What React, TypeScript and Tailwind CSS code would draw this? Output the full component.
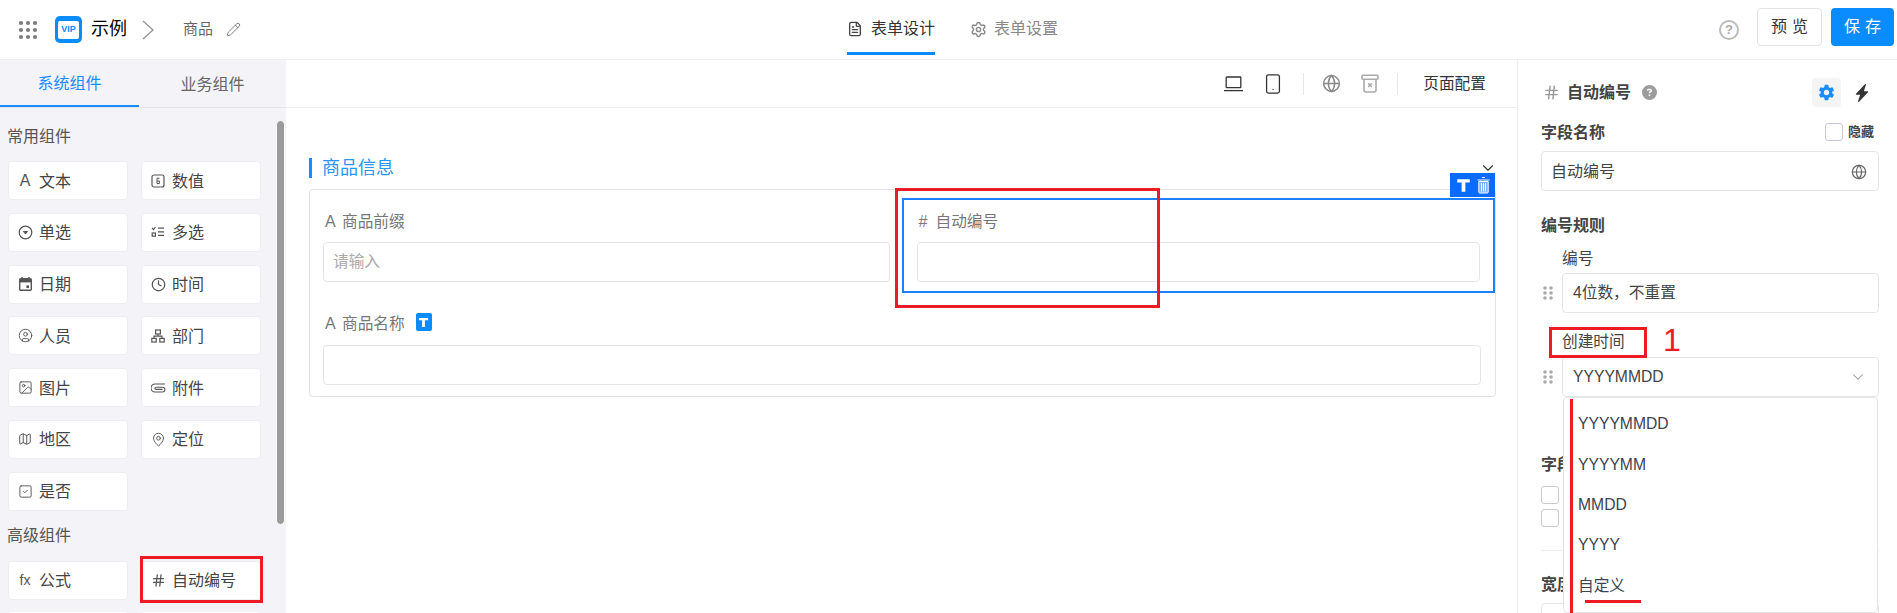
import {
  ChevronDown,
  CircleUser,
  Clock,
  FileText,
  Globe,
  Hash,
  Image,
  Map,
  MapPin,
  Pencil,
  Settings,
  Smartphone,
  SquareCheck,
} from "lucide-react";
import { BsLightningChargeFill } from "react-icons/bs";
import { IoSettingsSharp } from "react-icons/io5";
import { FaCircleQuestion } from "react-icons/fa6";

const FONT = "[font-family:'Liberation_Sans','Noto_Sans_CJK_SC',sans-serif]";

function NumberIcon() {
  return (
    <svg width="14" height="14" viewBox="0 0 14 14" fill="none" stroke="#555" strokeWidth="1.2">
      <rect x="1" y="1" width="12" height="12" rx="2" />
      <path d="M8.5 4.2H6v5.4h2.4V7H6" strokeWidth="1" />
    </svg>
  );
}

function RadioIcon() {
  return (
    <svg width="15" height="15" viewBox="0 0 15 15" fill="none" stroke="#555" strokeWidth="1.2">
      <circle cx="7.5" cy="7.5" r="6.3" />
      <path d="M4.6 6h5.8L7.5 9.4z" fill="#555" stroke="none" />
    </svg>
  );
}

function MultiIcon() {
  return (
    <svg width="14" height="14" viewBox="0 0 14 14" fill="none" stroke="#555" strokeWidth="1.2">
      <path d="M1 3l1.5 1.5L4.5 2" />
      <rect x="1.2" y="8" width="3.2" height="3.2" />
      <path d="M7 3.2h6M7 6.8h6M7 10.4h6" />
    </svg>
  );
}

function DateIcon() {
  return (
    <svg width="13" height="14" viewBox="0 0 13 14" fill="none">
      <path d="M3 0v3M10 0v3" stroke="#555" strokeWidth="1.4" />
      <rect x="0.7" y="1.7" width="11.6" height="11.6" rx="1" stroke="#555" strokeWidth="1.4" />
      <rect x="1" y="2" width="11" height="3.4" fill="#555" />
      <rect x="7.4" y="8.4" width="2.6" height="2.6" fill="#555" />
    </svg>
  );
}

function DeptIcon() {
  return (
    <svg width="14" height="14" viewBox="0 0 14 14" fill="none" stroke="#555" strokeWidth="1.2">
      <rect x="4.6" y="1" width="4.8" height="4" />
      <rect x="0.8" y="9.4" width="4.4" height="3.6" />
      <rect x="8.8" y="9.4" width="4.4" height="3.6" />
      <path d="M7 5v2.2M3 9.4V7.2h8v2.2" />
    </svg>
  );
}

function ClipIcon() {
  return (
    <svg width="15" height="10" viewBox="0 0 15 10" fill="none" stroke="#555" strokeWidth="1.1">
      <path d="M14 1H4a3.8 3.8 0 0 0 0 8h7.5a2.4 2.4 0 0 0 0-4.8H5a1.1 1.1 0 0 0 0 2.2h6.5" />
    </svg>
  );
}

function DragDots() {
  return (
    <svg width="10" height="14" viewBox="0 0 10 14" fill="#aaa">
      {[2, 7, 12].map((y) => (
        <g key={y}>
          <circle cx="2" cy={y} r="1.8" />
          <circle cx="8" cy={y} r="1.8" />
        </g>
      ))}
    </svg>
  );
}

function AppsIcon() {
  return (
    <svg width="20" height="20" viewBox="0 0 20 20" fill="#7b7b7b">
      {[3, 10, 17].map((y) =>
        [3, 10, 17].map((x) => <circle key={`${x}-${y}`} cx={x} cy={y} r="2.1" />)
      )}
    </svg>
  );
}

function TShape({ size = 12 }: { size?: number }) {
  return (
    <svg width={size} height={size} viewBox="0 0 12 12" fill="#fff">
      <path d="M1 1h10v2.6H7.5V11h-3V3.6H1z" />
    </svg>
  );
}

function TBadge() {
  return (
    <span className="flex h-[18px] w-[16px] items-center justify-center rounded-[2px] bg-[#0a8cff]">
      <TShape size={11} />
    </span>
  );
}

function TrashWhite() {
  return (
    <svg width="13" height="17" viewBox="0 0 13 17" fill="none" stroke="#fff">
      <path d="M5 0.5h3M0.5 3h12" strokeWidth="1.2" />
      <path d="M1.8 4.5h9.4V15a1 1 0 0 1-1 1H2.8a1 1 0 0 1-1-1z" fill="#7fb0ff" strokeWidth="1" />
      <path d="M4.5 6v8.5M6.5 6v8.5M8.5 6v8.5" strokeWidth="1" />
    </svg>
  );
}

function LaptopIcon() {
  return (
    <svg width="19" height="16" viewBox="0 0 19 16" fill="none" stroke="#333" strokeWidth="1.3">
      <rect x="2.2" y="1" width="14.6" height="10.6" rx="0.6" />
      <path d="M0 14.6h19" />
    </svg>
  );
}

function BinIcon() {
  return (
    <svg width="18" height="19" viewBox="0 0 18 19" fill="none" stroke="#aaa" strokeWidth="1.6">
      <rect x="1" y="1.2" width="16" height="4" rx="1" />
      <path d="M3 5.2V16a2 2 0 0 0 2 2h8a2 2 0 0 0 2-2V5.2" />
      <path d="M7.2 9.4l3.6 3.6M10.8 9.4l-3.6 3.6" />
    </svg>
  );
}

const basic = [
  { label: "文本", icon: <span className="text-[16px] leading-none text-[#555]">A</span> },
  { label: "数值", icon: <NumberIcon /> },
  { label: "单选", icon: <RadioIcon /> },
  { label: "多选", icon: <MultiIcon /> },
  { label: "日期", icon: <DateIcon /> },
  { label: "时间", icon: <Clock size={15} color="#555" /> },
  { label: "人员", icon: <CircleUser size={15} color="#555" strokeWidth={1.5} /> },
  { label: "部门", icon: <DeptIcon /> },
  { label: "图片", icon: <Image size={15} color="#555" strokeWidth={1.5} /> },
  { label: "附件", icon: <ClipIcon /> },
  { label: "地区", icon: <Map size={14} color="#555" strokeWidth={1.7} /> },
  { label: "定位", icon: <MapPin size={15} color="#555" strokeWidth={1.5} /> },
  { label: "是否", icon: <SquareCheck size={15} color="#555" strokeWidth={1.5} /> },
];

function ComponentCard({ label, icon }: { label: string; icon: React.ReactNode }) {
  return (
    <div className="flex h-[39px] items-center rounded-[4px] border border-[#eeeef2] bg-white pl-[8px] text-[16px] text-[#444]">
      <span className="flex w-[16px] justify-center">{icon}</span>
      <span className="ml-[6px] pt-[2px]">{label}</span>
    </div>
  );
}

function Sidebar() {
  return (
    <aside className="relative w-[286px] shrink-0 overflow-hidden bg-[#f3f3f8]">
      <div className="flex h-[48px] border-b border-[#e3e3e8] text-[16px]">
        <div className="flex w-[139px] items-center justify-center border-b-2 border-[#1a8cff] pt-[2px] text-[#1a8cff]">
          系统组件
        </div>
        <div className="flex w-[147px] items-center justify-center pt-[2px] text-[#666]">业务组件</div>
      </div>
      <div className="px-2 pt-[17px]">
        <div className="-ml-px h-6 text-[16px] leading-6 text-[#555]">常用组件</div>
        <div className="mt-3 grid w-[253px] grid-cols-2 gap-x-[13px] gap-y-[12.8px]">
          {basic.map((c) => (
            <ComponentCard key={c.label} {...c} />
          ))}
        </div>
        <div className="-ml-px mt-[13px] h-6 text-[16px] leading-6 text-[#555]">高级组件</div>
        <div className="mt-[13px] grid w-[253px] grid-cols-2 gap-x-[13px] gap-y-[12px]">
          <ComponentCard
            label="公式"
            icon={<span className="text-[14px] leading-none text-[#555]">fx</span>}
          />
          <ComponentCard label="自动编号" icon={<Hash size={15} color="#555" />} />
          <div className="h-[39px] rounded-[4px] bg-white" />
          <div className="h-[39px] rounded-[4px] bg-white" />
        </div>
      </div>
      {/* scrollbar */}
      <div className="absolute left-[276px] top-[60px] h-[405px] w-[9px] rounded-full border border-white bg-[#9b9b9b]" />
    </aside>
  );
}

function Header() {
  return (
    <header className="relative flex h-[60px] items-center border-b border-[#eeeeee] bg-white">
      <div className="flex items-center pl-[18px]">
        <AppsIcon />
        <div className="ml-[17px] flex h-[27px] w-[27px] items-center justify-center rounded-[5px] bg-[#0a8cff]">
          <span className="flex h-[18px] w-[21px] items-center justify-center rounded-[2px] bg-white text-[9px] font-bold text-[#0a8cff]">
            VIP
          </span>
        </div>
        <span className="ml-[9px] text-[18px] text-black">示例</span>
        <svg width="12" height="20" viewBox="0 0 12 20" fill="none" stroke="#999" strokeWidth="1.5" className="ml-[15px]">
          <path d="M1 1l10 9-10 9" />
        </svg>
        <span className="ml-[29px] text-[15px] text-[#666]">商品</span>
        <Pencil size={15} color="#777" strokeWidth={1.5} className="ml-[13px]" />
      </div>
      {/* centre tabs sit over the header */}
      <div className="absolute left-[847px] top-0 flex h-[55px] whitespace-nowrap text-[16px]">
        <div className="flex w-[88px] items-center border-b-[3px] border-[#0a8cff] pt-[6px] text-[#333]">
          <FileText size={18} color="#444" className="mr-[8px]" />
          表单设计
        </div>
        <div className="ml-[35px] flex items-center pb-[3px] pt-[6px] text-[#888]">
          <Settings size={17} color="#888" className="mr-[7px]" />
          表单设置
        </div>
      </div>
      <div className="ml-auto flex h-full items-start pr-[3px] pt-[8px]">
        <span className="mt-[12px] flex h-5 w-5 items-center justify-center rounded-full border-2 border-[#bbb] text-[13px] font-bold text-[#aaa]">
          ?
        </span>
        <button className="ml-[18px] h-[38px] w-[65px] rounded-[4px] border border-[#e3e3e3] bg-white pl-[5px] text-[16px] tracking-[5px] text-[#333]">
          预览
        </button>
        <button className="ml-[9px] h-[38px] w-[63px] rounded-[4px] bg-[#0a8cff] pl-[5px] text-[16px] tracking-[5px] text-white">
          保存
        </button>
      </div>
    </header>
  );
}

function Field({ label, icon, badge }: { label: string; icon: string; badge?: boolean }) {
  return (
    <div className="ml-[2px] flex h-[24px] items-center text-[15.7px] text-[#777]">
      <span className="w-[17px] text-[16px] leading-none">{icon}</span>
      {label}
      {badge && (
        <span className="-mt-[4px] ml-[11px]">
          <TBadge />
        </span>
      )}
    </div>
  );
}

function Canvas() {
  return (
    <main className="min-w-0 flex-1 bg-white">
      <div className="flex h-[48px] items-center justify-end border-b border-[#eeeeee] pr-[31px]">
        <LaptopIcon />
        <Smartphone size={22} color="#333" strokeWidth={1.4} className="ml-[19px]" />
        <span className="ml-[19px] h-[22px] w-px bg-[#e6e6e6]" />
        <Globe size={19} color="#888" strokeWidth={1.8} className="ml-[18px]" />
        <span className="ml-[20px]">
          <BinIcon />
        </span>
        <span className="ml-[18px] h-[22px] w-px bg-[#e6e6e6]" />
        <span className="ml-[25px] text-[15.7px] text-[#333]">页面配置</span>
      </div>
      <div className="ml-[23px] mr-[21px] pt-[50px]">
        <div className="flex h-[20px] items-center justify-between">
          <div className="border-l-[3px] border-[#1a8cff] pl-[10px] text-[18px] leading-[20px] text-[#2c95f2]">
            商品信息
          </div>
          <ChevronDown size={18} color="#333" strokeWidth={1.5} className="mr-[-1px]" />
        </div>
        <div className="mt-[11px] h-[208px] rounded-[4px] border border-[#e2e2e2] pt-2">
          <div className="grid h-[95px] grid-cols-2">
            <div className="px-[13px] pt-[12px]">
              <Field icon="A" label="商品前缀" />
              <div className="mt-[8px] flex h-[40px] items-center rounded-[4px] border border-[#e5e5e5] pl-[9px] text-[15.7px] text-[#aaa]">
                请输入
              </div>
            </div>
            <div className="relative -ml-[1px] border-2 border-[#1e7fff] px-[13px] pt-[10px]">
              <div className="absolute right-[-2px] top-[-27px] flex h-[24px] w-[45px] items-center justify-center gap-[6px] bg-[#0a6cff]">
                <TShape size={15} />
                <TrashWhite />
              </div>
              <Field icon="#" label="自动编号" />
              <div className="mt-[8px] h-[40px] rounded-[4px] border border-[#e5e5e5]" />
            </div>
          </div>
          <div className="pl-[13px] pr-[14px] pt-[19px]">
            <Field icon="A" label="商品名称" badge />
            <div className="mt-[9px] h-[40px] rounded-[4px] border border-[#e5e5e5]" />
          </div>
        </div>
      </div>
    </main>
  );
}

const options = ["YYYYMMDD", "YYYYMM", "MMDD", "YYYY", "自定义"];

function Checkbox() {
  return <span className="block h-[18px] w-[18px] rounded-[3px] border border-[#c9c9d4] bg-white" />;
}

function PropertyPanel() {
  return (
    <aside className="w-[380px] shrink-0 overflow-hidden border-l border-[#eeeeee] bg-white pl-[23px] pr-[18px] pt-[18px] text-[#444]">
      <div className="flex h-[29px] items-center">
        <Hash size={17} color="#999" strokeWidth={2} className="ml-[2px]" />
        <span className="ml-[7px] pt-[1px] text-[16px] font-bold text-[#444]">自动编号</span>
        <FaCircleQuestion size={15} color="#9c9c9c" className="ml-[11px]" />
        <span className="ml-auto flex h-[29px] w-[29px] items-center justify-center rounded-[4px] bg-[#f4f4f4]">
          <IoSettingsSharp size={17} color="#1a8cff" />
        </span>
        <BsLightningChargeFill size={18} color="#333" className="ml-[12px] mr-[8px]" />
      </div>
      <div className="mt-[14px] flex h-[22px] items-center">
        <span className="pt-[1px] text-[16px] font-bold">字段名称</span>
        <span className="ml-auto flex items-center pr-[5px]">
          <Checkbox />
          <span className="ml-[5px] text-[13px] font-bold">隐藏</span>
        </span>
      </div>
      <div className="mt-[8px] flex h-[40px] items-center justify-between rounded-[4px] border border-[#e5e5e5] px-[9px] pt-[1px] text-[16px]">
        自动编号
        <Globe size={16} color="#666" strokeWidth={1.8} className="mr-[2px]" />
      </div>
      <div className="mt-[23px] h-[22px] pt-[1px] text-[16px] font-bold leading-[22px]">编号规则</div>
      <div className="mt-[12px] h-[22px] pl-[21px] text-[15.7px] leading-[22px]">编号</div>
      <div className="mt-[3px] flex items-center">
        <span className="ml-[2px] mr-[9px] flex w-[10px]">
          <DragDots />
        </span>
        <div className="flex h-[40px] flex-1 items-center rounded-[4px] border border-[#e5e5e5] px-[10px] text-[15.7px]">
          4位数，不重置
        </div>
      </div>
      <div className="mt-[18px] h-[22px] pl-[21px] text-[15.7px] leading-[22px]">创建时间</div>
      <div className="relative mt-[4px] flex items-center">
        <span className="ml-[2px] mr-[9px] flex w-[10px]">
          <DragDots />
        </span>
        <div className="flex h-[40px] flex-1 items-center justify-between rounded-[4px] border border-[#e5e5e5] px-[10px] text-[15.7px]">
          YYYYMMDD
          <ChevronDown size={18} color="#999" strokeWidth={1.4} className="mr-[1px]" />
        </div>
        <div className="absolute left-[22px] right-[1px] top-[40px] h-[216px] rounded-[4px] border border-[#e5e5e5] bg-white pl-[14px] pt-[6px] text-[15.7px] text-[#3d4350]">
          {options.map((o) => (
            <div key={o} className="flex h-[40.3px] items-center">
              {o}
            </div>
          ))}
        </div>
      </div>
      <div className="mt-[57px] h-[22px] text-[16px] font-bold leading-[22px]">字段</div>
      <div className="mt-[10px] flex flex-col gap-[5px]">
        <Checkbox />
        <Checkbox />
      </div>
      <div className="mt-[23px] h-px bg-[#eeeeee]" />
      <div className="mt-[23px] h-[22px] text-[16px] font-bold leading-[22px]">宽度</div>
      <div className="mt-[7px] h-[40px] rounded-[4px] border border-[#e5e5e5]" />
    </aside>
  );
}

// red marks drawn on top of the screenshot
function Annotations() {
  return (
    <>
      <div className="absolute left-[140px] top-[556px] h-[47px] w-[123px] border-[3px] border-[#ed1c24]" />
      <div className="absolute left-[895px] top-[188px] h-[120px] w-[265px] border-[3px] border-[#ed1c24]" />
      <div className="absolute left-[1549px] top-[327px] h-[31px] w-[98px] border-[3px] border-[#ed1c24]" />
      <div className="absolute left-[1663px] top-[320px] text-[32px] leading-[40px] text-[#ed1c24]">1</div>
      <div className="absolute left-[1570px] top-[399px] h-[214px] w-[3px] bg-[#ed1c24]" />
      <div className="absolute left-[1585px] top-[600px] h-[3px] w-[56px] bg-[#ed1c24]" />
    </>
  );
}

export default function App() {
  return (
    <div className={`relative flex h-[613px] w-[1897px] flex-col overflow-hidden bg-white ${FONT}`}>
      <Header />
      <div className="flex min-h-0 flex-1">
        <Sidebar />
        <Canvas />
        <PropertyPanel />
      </div>
      <Annotations />
    </div>
  );
}
